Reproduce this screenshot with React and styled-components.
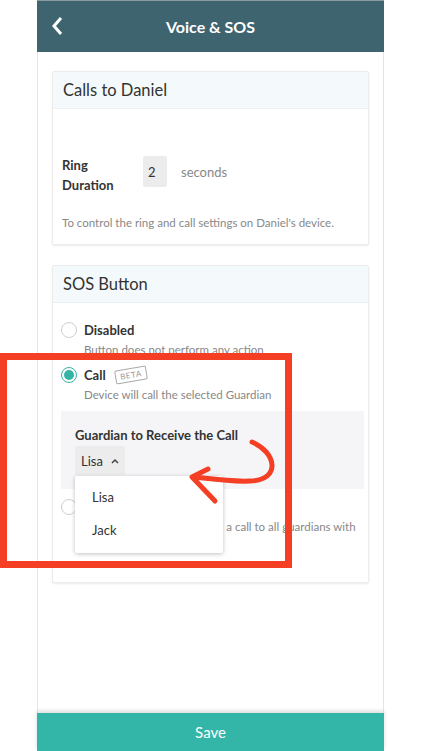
import React from "react";
import styled, { createGlobalStyle } from "styled-components";

const GlobalStyle = createGlobalStyle`
  html, body {
    margin: 0;
    padding: 0;
    background: #fff;
  }
  body {
    font-family: "Lato", "Open Sans", sans-serif;
    color: #333;
  }
`;

const Page = styled.div`
  position: relative;
  width: 422px;
  height: 751px;
  overflow: hidden;
  background: #fff;
`;

const Phone = styled.div`
  margin-left: 37px;
  width: 345px;
  height: 751px;
  border-left: 1px solid #e4e4e4;
  border-right: 1px solid #e4e4e4;
  display: flex;
  flex-direction: column;
`;

const Header = styled.div`
  height: 51px;
  border-top: 1px solid #8a9a9f;
  background: #3e6470;
  color: #fff;
  display: flex;
  align-items: center;
  justify-content: center;
  position: relative;
  font-size: 16px;
  font-weight: 700;
  margin: 0 -1px;
`;

const BackButton = styled.button`
  position: absolute;
  left: 11px;
  top: 14px;
  background: none;
  border: none;
  padding: 0;
  width: 18px;
  height: 22px;
  display: flex;
  align-items: center;
  justify-content: center;
`;

const Content = styled.div`
  flex: 1;
  padding: 19px 14px 0;
  display: flex;
  flex-direction: column;
  gap: 20px;
`;

const Card = styled.div`
  border: 1px solid #ececec;
  border-radius: 2px;
  box-shadow: 0 1px 2px rgba(0, 0, 0, 0.08);
  background: #fff;
`;

const CardHeader = styled.div`
  height: 36px;
  background: #f4fafb;
  border-bottom: 1px solid #eaf1f2;
  display: flex;
  align-items: center;
  padding: 0 10px;
  font-size: 16.5px;
  color: #333;
`;

const CardBody = styled.div`
  padding: ${(p) => p.$pad || "0 9px"};
  position: relative;
`;

const RingRow = styled.div`
  display: flex;
  align-items: center;
  margin-top: 46px;
`;

const RingLabel = styled.div`
  width: 81px;
  font-size: 13px;
  font-weight: 700;
  line-height: 20px;
  color: #333;
`;

const NumberBox = styled.div`
  width: 24px;
  height: 31px;
  background: #ececec;
  border-radius: 2px;
  font-size: 13px;
  display: flex;
  align-items: center;
  padding-left: 5px;
  box-sizing: border-box;
  margin-top: -7px;
`;

const Unit = styled.span`
  margin-left: 14px;
  margin-top: -7px;
  font-size: 13px;
  color: #888;
`;

const Note = styled.div`
  font-size: 11.5px;
  color: #888;
  margin: 21px 0 15px;
`;

const Option = styled.div`
  display: flex;
  align-items: flex-start;
  gap: 7px;
  margin-top: ${(p) => p.$top || "0"}px;
`;

const Radio = styled.span`
  flex: none;
  width: 16px;
  height: 16px;
  border-radius: 50%;
  box-sizing: border-box;
  border: 1.5px solid ${(p) => (p.$checked ? "#35b5a6" : "#cfcfcf")};
  background: #fff;
  display: flex;
  align-items: center;
  justify-content: center;
  margin-top: 1px;

  &::after {
    content: "";
    width: 10px;
    height: 10px;
    border-radius: 50%;
    background: ${(p) => (p.$checked ? "#35b5a6" : "transparent")};
  }
`;

const OptionText = styled.div`
  display: flex;
  flex-direction: column;
  white-space: nowrap;
`;

const OptionTitle = styled.div`
  font-size: 13px;
  font-weight: 700;
  line-height: 18px;
  display: flex;
  align-items: center;
  gap: 9px;
`;

const OptionDesc = styled.div`
  font-size: 11.5px;
  color: #888;
  line-height: 16px;
  margin-top: 3px;
`;

const Beta = styled.span`
  display: inline-block;
  transform: rotate(-10deg);
  border: 1px solid #aaa;
  border-radius: 2px;
  color: #999;
  font-size: 8px;
  font-weight: 400;
  letter-spacing: 0.6px;
  padding: 1px 4px;
  line-height: 10px;
`;

const GuardianBox = styled.div`
  background: #f5f5f7;
  margin: 8px 0 0;
  padding: 16px 14px 14px;
`;

const GuardianLabel = styled.div`
  font-size: 13px;
  font-weight: 700;
  color: #333;
  margin-bottom: 3px;
`;

const SelectWrap = styled.div`
  position: relative;
  display: inline-block;
`;

const Select = styled.div`
  display: flex;
  align-items: center;
  gap: 8px;
  height: 29px;
  padding: 0 6px;
  background: #ececec;
  border-radius: 2px;
  font-size: 13px;
`;

const Menu = styled.div`
  position: absolute;
  left: 0;
  top: calc(100% + 1px);
  width: 148px;
  background: #fff;
  border-radius: 2px;
  box-shadow: 0 1px 4px rgba(0, 0, 0, 0.25);
  padding: 4px 0 7px;
  z-index: 2;
`;

const MenuItem = styled.div`
  font-size: 13px;
  color: #333;
  padding: 0 17px;
  height: 33px;
  display: flex;
  align-items: center;
`;

const SaveBar = styled.button`
  height: 38px;
  margin: 0 -1px;
  border: none;
  background: #33b5a7;
  color: #fff;
  font-family: inherit;
  font-size: 15px;
  box-shadow: 0 -2px 4px rgba(0, 0, 0, 0.15);
`;

const Highlight = styled.div`
  position: absolute;
  left: 0;
  top: 353px;
  width: 292px;
  height: 215px;
  box-sizing: border-box;
  border: 7px solid #f43f24;
  pointer-events: none;
  z-index: 5;
`;

const Arrow = styled.svg`
  position: absolute;
  left: 0;
  top: 0;
  pointer-events: none;
  z-index: 6;
`;

export default function App() {
  return (
    <Page>
      <GlobalStyle />
      <Phone>
        <Header>
          <BackButton>
            <svg width="12" height="20" viewBox="0 0 12 20">
              <path d="M10 2 L3 10 L10 18" fill="none" stroke="#fff" strokeWidth="3" />
            </svg>
          </BackButton>
          Voice &amp; SOS
        </Header>
        <Content>
          <Card>
            <CardHeader>Calls to Daniel</CardHeader>
            <CardBody>
              <RingRow>
                <RingLabel>
                  Ring
                  <br />
                  Duration
                </RingLabel>
                <NumberBox>2</NumberBox>
                <Unit>seconds</Unit>
              </RingRow>
              <Note>To control the ring and call settings on Daniel's device.</Note>
            </CardBody>
          </Card>
          <Card>
            <CardHeader>SOS Button</CardHeader>
            <CardBody $pad="18px 4px 31px 8px">
              <Option>
                <Radio />
                <OptionText>
                  <OptionTitle>Disabled</OptionTitle>
                  <OptionDesc>Button does not perform any action</OptionDesc>
                </OptionText>
              </Option>
              <Option $top="8">
                <Radio $checked />
                <OptionText>
                  <OptionTitle>
                    Call <Beta>BETA</Beta>
                  </OptionTitle>
                  <OptionDesc>Device will call the selected Guardian</OptionDesc>
                </OptionText>
              </Option>
              <GuardianBox>
                <GuardianLabel>Guardian to Receive the Call</GuardianLabel>
                <SelectWrap>
                  <Select>
                    Lisa
                    <svg width="8" height="6" viewBox="0 0 8 6">
                      <path d="M1 5 L4 2 L7 5" fill="none" stroke="#444" strokeWidth="1.5" />
                    </svg>
                  </Select>
                  <Menu>
                    <MenuItem>Lisa</MenuItem>
                    <MenuItem>Jack</MenuItem>
                  </Menu>
                </SelectWrap>
              </GuardianBox>
              <Option $top="9">
                <Radio />
                <OptionText>
                  <OptionTitle>Call All</OptionTitle>
                  <OptionDesc>
                    Device will immediately dial a call to all guardians with
                    <br />
                    the app installed
                  </OptionDesc>
                </OptionText>
              </Option>
            </CardBody>
          </Card>
        </Content>
        <SaveBar>Save</SaveBar>
      </Phone>

      <Highlight />
      <Arrow width="422" height="751" viewBox="0 0 422 751">
        <path
          d="M252 442 C 276 452, 282 480, 250 481 C 232 482, 212 479, 194 477"
          fill="none"
          stroke="#f43f24"
          strokeWidth="5"
          strokeLinecap="round"
        />
        <path
          d="M208 469 L192 477 L215 501"
          fill="none"
          stroke="#f43f24"
          strokeWidth="5"
          strokeLinecap="round"
          strokeLinejoin="round"
        />
      </Arrow>
    </Page>
  );
}
